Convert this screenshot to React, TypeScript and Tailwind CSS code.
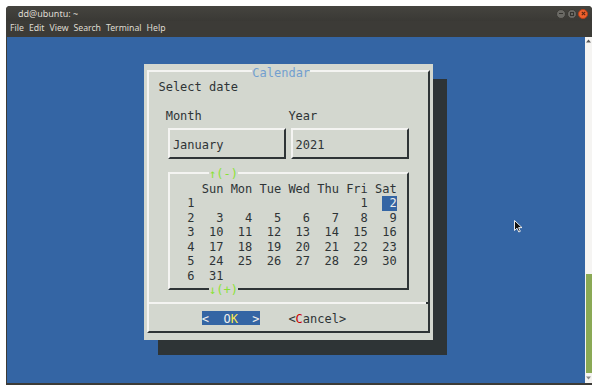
const weeks: (number | null)[][] = [
  [null, null, null, null, null, 1, 2],
  [3, 4, 5, 6, 7, 8, 9],
  [10, 11, 12, 13, 14, 15, 16],
  [17, 18, 19, 20, 21, 22, 23],
  [24, 25, 26, 27, 28, 29, 30],
  [31, null, null, null, null, null, null],
];
const dayNames = ["Sun", "Mon", "Tue", "Wed", "Thu", "Fri", "Sat"];
const selected = 2;

// box lines sit on the middle of the character cells, light top/left, dark bottom/right
const box =
  "border-2 border-t-[#f4f4f2] border-l-[#f4f4f2] border-r-[#2e3436] border-b-[#2e3436] mx-[2.6px] my-[6.25px]";

function WindowButtons() {
  return (
    <div className="flex items-center gap-[1px] pr-[4px]">
      <div className="w-[10px] h-[10px] rounded-full bg-[#6a6964] border border-[#3a3935] flex items-center justify-center">
        <div className="w-[4px] h-px bg-[#34332f]" />
      </div>
      <div className="w-[10px] h-[10px] rounded-full bg-[#6a6964] border border-[#3a3935] flex items-center justify-center">
        <div className="w-[4px] h-[4px] border border-[#34332f]" />
      </div>
      <div className="w-[10px] h-[10px] rounded-full bg-[#f0612d] border border-[#b5401b] flex items-center justify-center">
        <svg width="5" height="5" viewBox="0 0 5 5">
          <path d="M0.8 0.8 L4.2 4.2 M4.2 0.8 L0.8 4.2" stroke="#5a2612" strokeWidth="1.1" />
        </svg>
      </div>
    </div>
  );
}

function Dialog() {
  return (
    <div className="w-[40ch] h-[275.5px] bg-[#d3d7cf] shadow-[14px_15px_0_0_#2e3436] grid grid-cols-[repeat(40,1ch)] grid-rows-[repeat(19,14.5px)] text-[#2e3436] whitespace-pre">
      {/* outer frame */}
      <div className={`col-start-1 col-end-41 row-start-1 row-end-20 ${box}`} />
      <div className="col-start-16 col-end-24 row-start-1 pt-[1.5px] bg-[#d3d7cf] text-[#729fcf]">Calendar</div>

      <div className="col-start-3 col-end-20 row-start-2 pt-[1.5px]">Select date</div>

      <div className="col-start-4 col-end-12 row-start-4 pt-[1.5px]">Month</div>
      <div className="col-start-21 col-end-29 row-start-4 pt-[1.5px]">Year</div>

      <div className={`col-start-4 col-end-21 row-start-5 row-end-8 ${box}`} />
      <div className="col-start-5 col-end-18 row-start-6 pt-[1.5px]">January</div>
      <div className={`col-start-21 col-end-38 row-start-5 row-end-8 ${box}`} />
      <div className="col-start-22 col-end-30 row-start-6 pt-[1.5px]">2021</div>

      {/* calendar */}
      <div className={`col-start-4 col-end-38 row-start-8 row-end-17 ${box}`} />
      <div className="col-start-10 col-end-14 row-start-8 pt-[1.5px] bg-[#d3d7cf] text-[#8ae234]">↑(-)</div>
      <div className="col-start-10 col-end-14 row-start-16 pt-[1.5px] bg-[#d3d7cf] text-[#8ae234]">↓(+)</div>
      <div className="col-start-7 col-end-37 row-start-9 row-end-16 pt-[1.5px] flex flex-col">
        <div className="flex h-[14.5px]">
          <span className="w-[2ch]" />
          {dayNames.map((d) => (
            <span key={d} className="w-[4ch]">
              {d}
            </span>
          ))}
        </div>
        {weeks.map((w, i) => (
          <div key={i} className="flex h-[14.5px]">
            <span className="w-[2ch]">{i + 1}</span>
            {w.map((d, j) => (
              <span key={j} className="w-[4ch] pl-[1ch]">
                <span
                  className={
                    d === selected
                      ? "inline-block w-[2ch] text-right bg-[#3465a4] text-[#eeeeec]"
                      : "inline-block w-[2ch] text-right"
                  }
                >
                  {d ?? ""}
                </span>
              </span>
            ))}
          </div>
        ))}
      </div>

      {/* separator above the buttons */}
      <div className="col-start-1 col-end-41 row-start-17 self-center mx-[2.6px] h-[2px] bg-[#f4f4f2] flex justify-end">
        <div className="w-[4px] h-[2px] bg-[#2e3436]" />
      </div>

      <div className="col-start-9 col-end-17 row-start-18 pt-[1.5px] bg-[#3465a4] text-[#eeeeec]">
        {"<  O"}
        <span className="text-[#fce94f]">K</span>
        {"  >"}
      </div>
      <div className="col-start-21 col-end-29 row-start-18 pt-[1.5px]">
        {"<"}
        <span className="text-[#cc0000]">C</span>
        {"ancel>"}
      </div>
    </div>
  );
}

export default function App() {
  return (
    <div className="w-[600px] h-[390px] bg-white pt-[6px] pl-[6px] overflow-hidden">
      <div className="w-[586px] h-[379px] flex flex-col rounded-t-[4px] overflow-hidden bg-[#3c3b37]">
        {/* title bar */}
        <div className="h-[15px] flex items-center justify-between bg-gradient-to-b from-[#45443f] to-[#3a3935] font-['Noto_Sans',sans-serif] text-[9px] text-[#dfdbd2]">
          <span className="pl-[12px]">dd@ubuntu: ~</span>
          <WindowButtons />
        </div>
        {/* menu bar */}
        <div className="h-[16px] flex items-center gap-[5px] pl-[4px] bg-[#3c3b37] font-['Noto_Sans',sans-serif] text-[8.7px] text-[#dfdbd2]">
          <span>File</span>
          <span>Edit</span>
          <span>View</span>
          <span>Search</span>
          <span>Terminal</span>
          <span>Help</span>
        </div>
        {/* terminal */}
        <div className="flex-1 flex pl-px pb-[2px] bg-[#3c3b37]">
          <div className="relative flex-1 bg-[#3465a4] pl-[137px] pt-[27px] font-['DejaVu_Sans_Mono',monospace] text-[12px] leading-[14.5px]">
            <Dialog />
            <svg className="absolute left-[507px] top-[183px]" width="9" height="13" viewBox="0 0 9 13">
              <path d="M0.5 0.5 L0.5 10.5 L3 8.2 L4.8 12 L6.3 11.3 L4.6 7.6 L8 7.6 Z" fill="#111" stroke="#fff" strokeWidth="0.9" />
            </svg>
          </div>
          <div className="w-[7px] flex flex-col bg-[#f5f4f2]">
            <div className="h-[237px] flex justify-center pt-[2px]">
              <svg width="5" height="4" viewBox="0 0 5 4">
                <path d="M0 3.5 L2.5 0.5 L5 3.5 Z" fill="#555" />
              </svg>
            </div>
            <div className="h-[99px] ml-px bg-[#8aa955]" />
            <div className="flex-1 flex justify-center items-center">
              <svg width="5" height="4" viewBox="0 0 5 4">
                <path d="M0 0.5 L2.5 3.5 L5 0.5 Z" fill="#888" />
              </svg>
            </div>
          </div>
        </div>
      </div>
    </div>
  );
}
